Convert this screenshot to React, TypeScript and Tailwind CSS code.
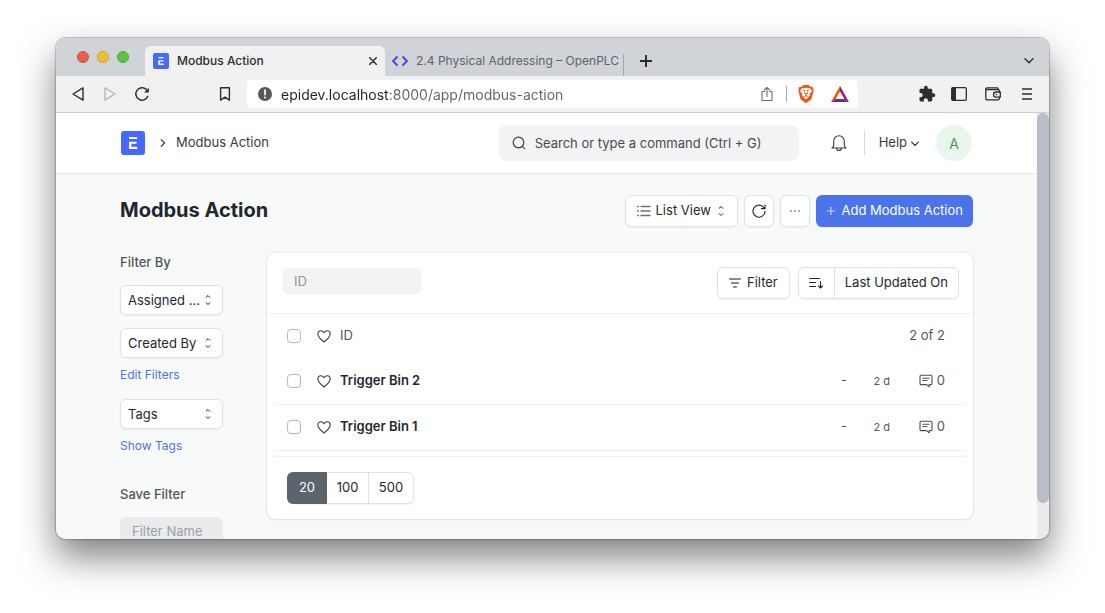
import React from "react";
import { SiBrave } from "react-icons/si";
import { MdExtension } from "react-icons/md";

const stroke = {
  fill: "none",
  stroke: "currentColor",
  strokeLinecap: "round" as const,
  strokeLinejoin: "round" as const,
};

function Logo({ className }: { className: string }) {
  return (
    <svg viewBox="0 0 24 24" className={className} aria-hidden="true">
      <rect width="24" height="24" rx="3" fill="#4569ff" />
      <path d="M8 6h8v2H8zM8 10.800h7.600v2h-5.200v3H16.200v2.200H8z" fill="#fff" />
    </svg>
  );
}

function UpDown() {
  return (
    <svg
      viewBox="0 0 8 12"
      className="pointer-events-none absolute right-[11px] top-1/2 h-3 w-2 -translate-y-1/2 text-[#1f272e]"
      aria-hidden="true"
    >
      <path d="M2.200 3.300 4 1.500l1.800 1.800M2.200 8.700 4 10.500l1.800-1.800" {...stroke} strokeWidth="1" />
    </svg>
  );
}

function Heart() {
  return (
    <button aria-label="Like" className="block text-[#3a4046]">
      <svg viewBox="0 0 16 16" className="size-4" aria-hidden="true">
        <path
          d="M8 14C5 11.7 1.800 9 1.800 5.800 1.800 4 3.200 2.800 4.800 2.800c1.400 0 2.500.8 3.200 2 .7-1.200 1.800-2 3.200-2 1.600 0 3 1.200 3 3C14.200 9 11 11.700 8 14z"
          {...stroke}
          strokeWidth="1.1"
        />
      </svg>
    </button>
  );
}

function Check({ label }: { label: string }) {
  return (
    <input
      type="checkbox"
      aria-label={label}
      className="block size-[14px] appearance-none rounded-[4px] border border-[#b4bac3] bg-white shadow-xs checked:bg-[#4b74ea]"
    />
  );
}

function Comment() {
  return (
    <svg viewBox="0 0 14 14" className="size-[14px] text-[#4a4f55]" aria-hidden="true">
      <path
        d="M2.200 1.200h9.600c.7 0 1.200.5 1.200 1.200v7c0 .7-.5 1.200-1.200 1.200h-1.600v2.200L7.600 10.600H2.200C1.500 10.600 1 10.100 1 9.400v-7c0-.7.5-1.200 1.200-1.200z"
        {...stroke}
        strokeWidth="1.1"
      />
      <path d="M3.700 4.200h6.400M3.700 6.500h4.300" {...stroke} strokeWidth="1.1" />
    </svg>
  );
}

function FilterSelect({ label }: { label: string }) {
  return (
    <div className="relative">
      <select
        aria-label={label}
        className="h-[30px] w-full appearance-none rounded-md border border-[#dfe2e4] bg-white pl-[7px] pr-5 text-[13px] text-[#1f272e] shadow-xs"
      >
        <option>{label}</option>
      </select>
      <UpDown />
    </div>
  );
}

function TabStrip() {
  return (
    <div className="flex h-[38px] shrink-0 items-end bg-[#d0d3d7]">
      <div className="flex w-[89px] items-center gap-2 self-center pl-[21px]">
        <button aria-label="Close window" className="size-3 rounded-full border border-[#d0503f] bg-[#e8604f]" />
        <button aria-label="Minimize window" className="size-3 rounded-full border border-[#d5a528] bg-[#f0bd34]" />
        <button aria-label="Zoom window" className="size-3 rounded-full border border-[#4ca932] bg-[#5cc53c]" />
      </div>
      <div className="flex h-[30px] w-60 items-center rounded-t-md bg-[#f1f1f2] px-2">
        <Logo className="size-4" />
        <span className="ml-2 flex-1 text-[12px] font-medium text-[#2b2d31]">Modbus Action</span>
        <button aria-label="Close tab" className="text-[#303338]">
          <svg viewBox="0 0 8 8" className="size-2" aria-hidden="true">
            <path d="M.5.5l7 7M7.500.5l-7 7" {...stroke} strokeWidth="1.500" />
          </svg>
        </button>
      </div>
      <div className="flex h-[30px] items-center pl-[7px]">
        <svg viewBox="0 0 16 12" className="h-3 w-4" aria-hidden="true">
          <path d="M5.500 1.500 1 6l4.500 4.500M10.500 1.500 15 6l-4.500 4.500" fill="none" stroke="#4440f0" strokeWidth="1.800" />
        </svg>
        <span className="ml-2 w-[207px] overflow-hidden whitespace-nowrap text-[12px] text-[#5f6368]">
          2.4 Physical Addressing – OpenPLC
        </span>
        <span className="mt-2 h-[22px] w-px bg-[#a3a7ac]" />
      </div>
      <button aria-label="New tab" className="ml-4 flex h-[30px] items-center text-[#26282b]">
        <svg viewBox="0 0 12 12" className="size-3" aria-hidden="true">
          <path d="M6 .5v11M.5 6h11" {...stroke} strokeWidth="1.900" />
        </svg>
      </button>
      <button aria-label="Search tabs" className="ml-auto mr-[15px] flex h-[30px] items-center text-[#303338]">
        <svg viewBox="0 0 10 6" className="h-[6px] w-[10px]" aria-hidden="true">
          <path d="M1 .8l4 4 4-4" {...stroke} strokeWidth="1.500" />
        </svg>
      </button>
    </div>
  );
}

function Toolbar() {
  return (
    <div className="flex h-[37px] shrink-0 items-center border-b border-[#cbcdd1] bg-[#f1f1f2] text-[#2b2d31]">
      <button aria-label="Back" className="ml-[15px]">
        <svg viewBox="0 0 14 16" className="h-4 w-[14px]" aria-hidden="true">
          <path d="M12 1.800v12.400L2 8z" {...stroke} strokeWidth="1.400" />
        </svg>
      </button>
      <button aria-label="Forward" className="ml-[18px] text-[#b4b6ba]">
        <svg viewBox="0 0 14 16" className="h-4 w-[14px]" aria-hidden="true">
          <path d="M2 1.800v12.400L12 8z" {...stroke} strokeWidth="1.400" />
        </svg>
      </button>
      <button aria-label="Reload" className="ml-[17px]">
        <svg viewBox="0 0 16 16" className="size-4" aria-hidden="true">
          <path d="M13.800 10.300A6.200 6.200 0 1 1 12.200 3.400" {...stroke} strokeWidth="1.500" />
          <path d="M14.800 1.800v4.600h-4.600z" fill="currentColor" />
        </svg>
      </button>
      <button aria-label="Bookmark" className="ml-[67px]">
        <svg viewBox="0 0 16 16" className="size-4" aria-hidden="true">
          <path d="M3.600 1.800h8.800v12.400L8 11.200l-4.400 3z" {...stroke} strokeWidth="1.400" />
        </svg>
      </button>
      <div className="ml-[14px] flex h-7 min-w-0 flex-1 items-center rounded bg-white">
        <svg viewBox="0 0 14 14" className="ml-[11px] size-[14px] shrink-0" aria-hidden="true">
          <circle cx="7" cy="7" r="7" fill="#55585d" />
          <path d="M7 3.200v4.400" stroke="#fff" strokeWidth="1.700" strokeLinecap="round" />
          <circle cx="7" cy="10.500" r="1" fill="#fff" />
        </svg>
        <input
          aria-label="Address"
          defaultValue="epidev.localhost:8000/app/modbus-action"
          className="ml-[9px] h-7 min-w-0 flex-1 bg-[linear-gradient(to_right,#202124_109px,#5f6368_109px)] bg-clip-text text-[14px] text-transparent outline-none"
        />
        <button aria-label="Share" className="text-[#6b6e73]">
          <svg viewBox="0 0 14 16" className="h-4 w-[14px]" aria-hidden="true">
            <path d="M4.600 5.500H2v9h10v-9H9.400M7 10.500V1.500M4.300 4 7 1.300 9.700 4" {...stroke} strokeWidth="1.100" />
          </svg>
        </button>
        <span className="ml-3 h-4 w-px bg-[#a9abaf]" />
        <button aria-label="Brave Shields" className="ml-[10px] text-[#e85a1c]">
          <SiBrave size={18} />
        </button>
        <button aria-label="Brave Rewards" className="ml-4 mr-[9px]">
          <svg viewBox="0 0 18 16" className="h-4 w-[18px]" aria-hidden="true">
            <path d="M9 0 0 16l4.700-3L9 5.200z" fill="#ff5000" />
            <path d="M9 0l9 16-4.700-3L9 5.200z" fill="#9e1f63" />
            <path d="M0 16h18l-4.700-3H4.700z" fill="#662d91" />
          </svg>
        </button>
      </div>
      <button aria-label="Extensions" className="ml-[60px]">
        <MdExtension size={18} />
      </button>
      <button aria-label="Sidebar" className="ml-[15px]">
        <svg viewBox="0 0 16 14" className="h-[14px] w-4" aria-hidden="true">
          <rect x=".700" y=".700" width="14.600" height="12.600" rx="1.200" {...stroke} strokeWidth="1.300" />
          <path d="M1 1h4v12H1z" fill="currentColor" />
        </svg>
      </button>
      <button aria-label="Wallet" className="ml-[18px]">
        <svg viewBox="0 0 16 14" className="h-[14px] w-4" aria-hidden="true">
          <path
            d="M14.400 5V3.900c0-.7-.5-1.200-1.200-1.200H2.200C1.200 2.700.8 2.100.8 1.700S1.200.8 2 .8h10.200c.6 0 1 .4 1 1v.900M.8 1.700v9.300c0 1 .8 1.900 1.900 1.900h10c.9 0 1.700-.7 1.700-1.700v-1"
            {...stroke}
            strokeWidth="1.300"
          />
          <path d="M15.300 5h-4.200a2.600 2.600 0 0 0 0 5.200h4.200z" {...stroke} strokeWidth="1.300" />
          <circle cx="11.500" cy="7.600" r=".8" fill="currentColor" />
        </svg>
      </button>
      <button aria-label="Menu" className="ml-[21px] mr-[17px]">
        <svg viewBox="0 0 10 12" className="h-3 w-[10px]" aria-hidden="true">
          <path d="M0 1h10M0 6h10M0 11h10" stroke="currentColor" strokeWidth="1.400" />
        </svg>
      </button>
    </div>
  );
}

function Navbar() {
  return (
    <header className="border-b border-[#e6e9ea] bg-white px-16">
      <div className="flex h-[60px] items-center text-[13px] text-[#333c44]">
        <a href="#home" aria-label="Home" className="ml-px">
          <Logo className="size-6" />
        </a>
        <svg viewBox="0 0 6 8" className="ml-[15px] h-2 w-[6px]" aria-hidden="true">
          <path d="M1.200.7 4.500 4 1.200 7.300" {...stroke} strokeWidth="1.200" />
        </svg>
        <a href="#modbus-action" className="ml-[10px]">
          Modbus Action
        </a>
        <label className="ml-auto flex h-9 w-[300px] items-center rounded-lg bg-[#f3f3f5] pl-3">
          <svg viewBox="0 0 16 16" className="size-4 text-[#3a4046]" aria-hidden="true">
            <circle cx="7.500" cy="7.500" r="5.300" {...stroke} strokeWidth="1.200" />
            <path d="m11.400 11.400 2.200 2.200" {...stroke} strokeWidth="1.200" />
          </svg>
          <input
            aria-label="Search"
            placeholder="Search or type a command (Ctrl + G)"
            className="ml-2 h-9 min-w-0 flex-1 bg-transparent outline-none placeholder:text-[#464b52]"
          />
        </label>
        <button aria-label="Notifications" className="ml-8">
          <svg viewBox="0 0 16 18" className="h-[18px] w-4" aria-hidden="true">
            <path
              d="M1 14h14c-1-.8-1.700-1.600-1.700-3.200V7.300C13.300 4.300 11 1.700 8 1.700S2.700 4.300 2.700 7.300v3.500C2.700 12.400 2 13.200 1 14zM5.700 14.200a2.300 2.300 0 0 0 4.600 0"
              {...stroke}
              strokeWidth="1.100"
            />
          </svg>
        </button>
        <span className="ml-[17px] h-6 w-px bg-[#d5d9dd]" />
        <button className="ml-[14px] flex items-center gap-1">
          Help
          <svg viewBox="0 0 8 6" className="mt-[2px] h-[6px] w-2" aria-hidden="true">
            <path d="M.7 1.200 4 4.500l3.300-3.300" {...stroke} strokeWidth="1.200" />
          </svg>
        </button>
        <button className="ml-[17px] mr-px size-9 rounded-full bg-[#eaf5ec] text-[14px] text-[#48974f]">A</button>
      </div>
    </header>
  );
}

const outline = "rounded-md border border-[#dfe2e4] bg-white text-[13px] text-[#1f272e] shadow-xs";

function PageHead() {
  return (
    <div className="flex items-center gap-[6px]">
      <h1 className="mb-[2px] mr-auto text-[20px] font-bold text-[#1f272e]">Modbus Action</h1>
      <div className="relative">
        <svg viewBox="0 0 14 12" className="absolute left-3 top-[10px] h-3 w-[14px] text-[#6a7178]" aria-hidden="true">
          <path d="M4 1.500h9M4 6h9M4 10.500h9" {...stroke} strokeWidth="1.300" />
          <path d="M.5 1.500h1M.5 6h1M.5 10.500h1" {...stroke} strokeWidth="1.300" />
        </svg>
        <select
          aria-label="View"
          className="h-8 w-[113px] appearance-none rounded-md border border-[#dfe2e4] bg-white pl-[30px] text-[13px] text-[#1f272e] shadow-xs"
        >
          <option>List View</option>
        </select>
        <svg viewBox="0 0 8 12" className="pointer-events-none absolute right-[13px] top-[10px] h-3 w-2 text-[#1f272e]" aria-hidden="true">
          <path d="M2.200 3.300 4 1.500l1.800 1.800M2.200 8.700 4 10.500l1.800-1.800" {...stroke} strokeWidth="1" />
        </svg>
      </div>
      <button aria-label="Refresh" className={`flex h-8 w-[30px] items-center justify-center ${outline}`}>
        <svg viewBox="0 0 14 14" className="size-[14px]" aria-hidden="true">
          <path d="M13 7.200a6 6 0 1 1-1.900-4.400L12.800 4.500" {...stroke} strokeWidth="1.100" />
          <path d="M13 1v3.600H9.400" {...stroke} strokeWidth="1.100" />
        </svg>
      </button>
      <button aria-label="More" className={`flex h-8 w-[30px] items-center justify-center ${outline}`}>
        <svg viewBox="0 0 12 4" className="h-1 w-3" aria-hidden="true">
          <g fill="#3a4046">
            <circle cx="2" cy="2" r=".8" />
            <circle cx="6" cy="2" r=".8" />
            <circle cx="10" cy="2" r=".8" />
          </g>
        </svg>
      </button>
      <button className="flex h-8 items-center gap-[6px] rounded-md bg-[#4b74ea] px-[10px] text-[13px] text-white shadow-xs">
        <svg viewBox="0 0 10 10" className="size-[10px]" aria-hidden="true">
          <path d="M5 1v8M1 5h8" stroke="#c5d2f8" strokeWidth="1.200" />
        </svg>
        Add Modbus Action
      </button>
    </div>
  );
}

function Sidebar() {
  return (
    <aside className="w-[103px] shrink-0 text-[12px] leading-[18px]">
      <h2 className="text-[13px] font-medium leading-[18px] text-[#50565e]">Filter By</h2>
      <div className="mt-[14px] flex flex-col gap-[13px]">
        <FilterSelect label="Assigned ..." />
        <FilterSelect label="Created By" />
      </div>
      <a href="#edit-filters" className="mb-[15px] mt-2 block text-[#4b74ea]">
        Edit Filters
      </a>
      <FilterSelect label="Tags" />
      <a href="#show-tags" className="mt-2 block text-[#4b74ea]">
        Show Tags
      </a>
      <h2 className="mt-[30px] text-[13px] font-medium leading-[18px] text-[#50565e]">Save Filter</h2>
      <input
        aria-label="Filter Name"
        placeholder="Filter Name"
        className="mt-[14px] block h-7 w-full rounded-md bg-[#e9ebee] px-3 text-[13px] outline-none placeholder:text-[#98a1a9]"
      />
    </aside>
  );
}

const records = ["Trigger Bin 2", "Trigger Bin 1"];

function ListCard() {
  return (
    <section className="min-w-0 flex-1 rounded-lg bg-white shadow-[0_0_2px_rgba(17,43,66,0.22),0_1px_2px_rgba(17,43,66,0.06)]">
      <div className="flex h-[61px] items-center border-b border-[#eef0f1] pl-[15px] pr-[14px]">
        <input
          aria-label="ID"
          placeholder="ID"
          className="mb-1 mr-auto h-[26px] w-[140px] rounded-md bg-[#f3f3f5] px-3 text-[13px] outline-none placeholder:text-[#8d959d]"
        />
        <button className={`flex h-8 items-center gap-[6px] px-[11px] ${outline}`}>
          <svg viewBox="0 0 12 10" className="h-[10px] w-3 text-[#5c646c]" aria-hidden="true">
            <path d="M.6 1h10.800M2.600 5h6.800M4.600 9h2.800" {...stroke} strokeWidth="1.300" />
          </svg>
          Filter
        </button>
        <div className={`ml-2 flex h-8 ${outline}`}>
          <button aria-label="Sort direction" className="flex w-9 items-center justify-center border-r border-[#dfe2e4]">
            <svg viewBox="0 0 14 12" className="h-3 w-[14px]" aria-hidden="true">
              <path d="M.6 1.500h9.800M.6 5.500h6M.6 9.500h6M11.500 4.500v6.500M9.500 9l2 2 2-2" {...stroke} strokeWidth="1.100" />
            </svg>
          </button>
          <button className="px-[10px]">Last Updated On</button>
        </div>
      </div>
      <div className="px-[6px]">
        <table className="w-full border-collapse text-[13px] text-[#50565e]">
          <thead>
            <tr className="h-11">
              <th className="w-[43px] pl-[14px]">
                <Check label="Select all" />
              </th>
              <th className="w-6">
                <Heart />
              </th>
              <th className="text-left font-normal">ID</th>
              <th colSpan={3} className="pr-[22px] text-right font-normal">
                2 of 2
              </th>
            </tr>
          </thead>
          <tbody>
            {records.map((name) => (
              <tr key={name} className="h-[46px] border-b border-[#eef0f1]">
                <td className="pl-[14px]">
                  <Check label={`Select ${name}`} />
                </td>
                <td>
                  <Heart />
                </td>
                <td className="font-semibold text-[#1f272e]">{name}</td>
                <td className="w-[26px] text-right">-</td>
                <td className="w-[43px] text-right text-[11px]">2 d</td>
                <td className="w-[77px] pr-[22px]">
                  <span className="flex items-center justify-end gap-1">
                    <Comment />0
                  </span>
                </td>
              </tr>
            ))}
          </tbody>
        </table>
        <div className="mt-[5px] border-t border-[#eef0f1] px-[14px] py-[15px]">
          <div className={`flex h-8 w-fit ${outline}`}>
            <button className="-my-px -ml-px w-10 rounded-l-md bg-[#5c646e] text-white">20</button>
            <button className="w-[42px] border-r border-[#dfe2e4]">100</button>
            <button className="w-11">500</button>
          </div>
        </div>
      </div>
    </section>
  );
}

export default function App() {
  return (
    <div className="h-screen bg-white px-14 pb-[74px] pt-[38px] font-['Inter',sans-serif]">
      <div className="flex h-full flex-col overflow-hidden rounded-[10px] shadow-[0_0_1px_1px_rgba(0,0,0,0.22),0_18px_36px_rgba(0,0,0,0.5)]">
        <TabStrip />
        <Toolbar />
        <div className="flex min-h-0 flex-1 bg-[#e9ebee]">
          <div className="min-w-0 flex-1 overflow-hidden bg-[#f8faf9]">
            <Navbar />
            <main className="px-16 pt-[21px]">
              <PageHead />
              <div className="mt-[26px] flex items-start gap-11">
                <Sidebar />
                <ListCard />
              </div>
            </main>
          </div>
          <div className="w-3 pb-9">
            <div className="h-full rounded-full bg-[#b9bdc6]" />
          </div>
        </div>
      </div>
    </div>
  );
}
